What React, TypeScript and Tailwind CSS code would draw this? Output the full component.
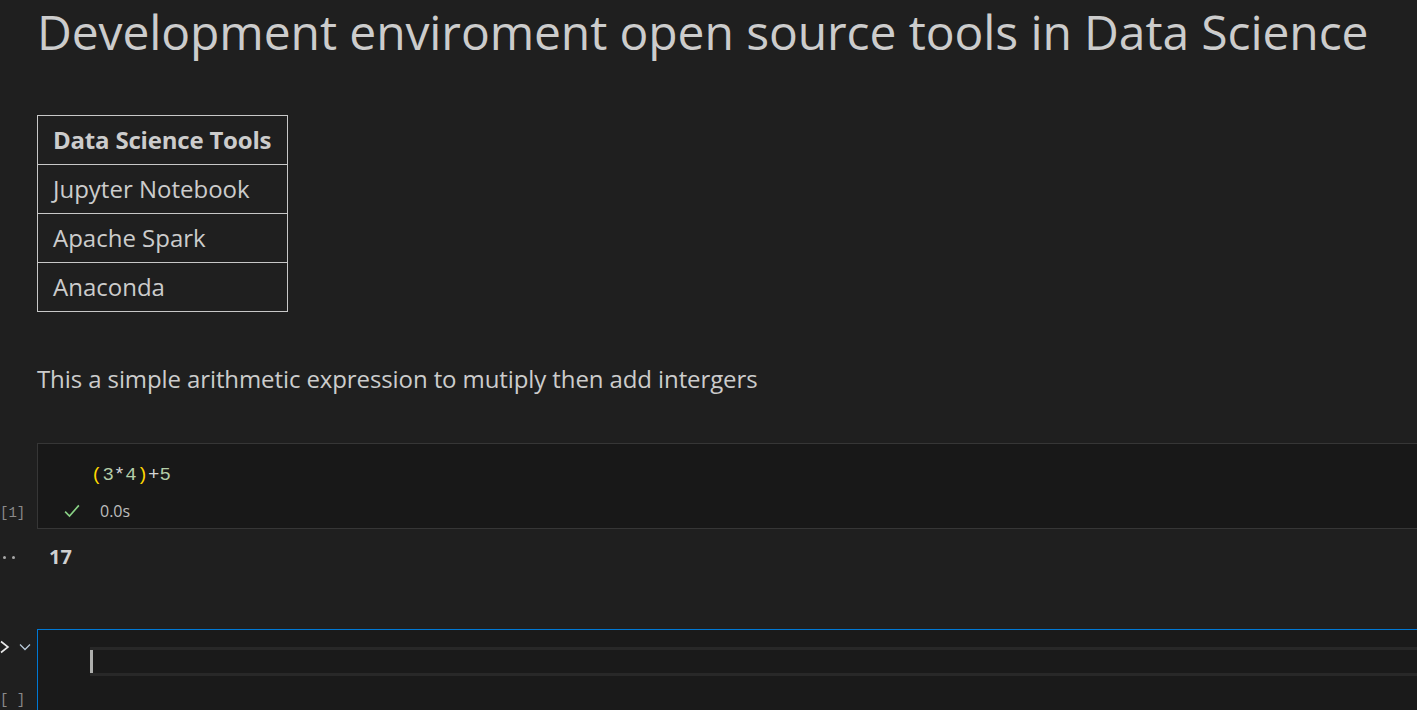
import React from "react"

const sans = { fontFamily: '"Open Sans", "Noto Sans", sans-serif' }
const mono = { fontFamily: '"Liberation Mono", "DejaVu Sans Mono", monospace' }

const tools = ["Jupyter Notebook", "Apache Spark", "Anaconda"]

export default function App() {
  return (
    <div className="h-[710px] w-full overflow-hidden bg-[#1f1f1f] text-[#cccccc]" style={sans}>
      {/* Markdown cell */}
      <div className="pl-[37px]">
        <h1 className="h-[64px] text-[48px] leading-[64px] tracking-[-0.1px] text-[#cccccc]">
          Development enviroment open source tools in Data Science
        </h1>

        <table className="mt-[51px] w-[251px] table-fixed border-collapse whitespace-nowrap text-[24px]">
          <thead>
            <tr>
              <th className="h-[49px] border border-[#c8c8c8] pl-[15px] text-left font-bold tracking-[-0.2px]">
                Data Science Tools
              </th>
            </tr>
          </thead>
          <tbody>
            {tools.map((tool) => (
              <tr key={tool}>
                <td className="h-[49px] border border-[#c8c8c8] pl-[15px]">{tool}</td>
              </tr>
            ))}
          </tbody>
        </table>

        <p className="mt-[49px] h-[36px] text-[24px] leading-[36px] tracking-[-0.1px]">
          This a simple arithmetic expression to mutiply then add intergers
        </p>
      </div>

      {/* Code cell [1] */}
      <div className="mt-[46px] flex">
        <div className="flex w-[37px] shrink-0 flex-col justify-end pb-[7px]">
          <span className="text-[14px] leading-[18px] text-[#8b8b8b]" style={mono}>[1]</span>
        </div>
        <div className="h-[86px] flex-1 border border-r-0 border-[#363636] bg-[#181818]">
          <div className="pl-[53px] pt-[19px] text-[19px] leading-[24px]" style={mono}>
            <span className="text-[#ffd700]">(</span>
            <span className="text-[#b5cea8]">3</span>
            <span className="text-[#d4d4d4]">*</span>
            <span className="text-[#b5cea8]">4</span>
            <span className="text-[#ffd700]">)</span>
            <span className="text-[#d4d4d4]">+</span>
            <span className="text-[#b5cea8]">5</span>
          </div>
          <div className="mt-[12px] flex items-center pl-[24px]">
            <svg width="20" height="20" viewBox="0 0 16 16" fill="none" stroke="#89d185" strokeWidth="1.3">
              <path d="M2.5 8.5l3.5 3.5 7.5-8.5" />
            </svg>
            <span className="ml-[18px] text-[16px] text-[#bdbdbd]">0.0s</span>
          </div>
        </div>
      </div>

      {/* Output */}
      <div className="flex h-[100px] items-start pt-[14px]">
        <div className="flex h-[28px] w-[37px] shrink-0 items-center gap-[6px] pl-[3px]">
          <div className="h-[3px] w-[3px] rounded-full bg-[#a8a8a8]" />
          <div className="h-[3px] w-[3px] rounded-full bg-[#a8a8a8]" />
        </div>
        <span className="pl-[12px] text-[20px] font-bold leading-[28px] text-[#d0d0d0]">17</span>
      </div>

      {/* Empty focused cell */}
      <div className="flex">
        <div className="flex w-[37px] shrink-0 flex-col pt-[11px]">
          <div className="flex h-[14px] items-center">
            <svg width="10" height="14" viewBox="0 0 10 14" fill="none" stroke="#e8e8e8" strokeWidth="1.6">
              <path d="M1 1.5l7 5.5-7 5.5" />
            </svg>
            <svg className="ml-[9px]" width="12" height="8" viewBox="0 0 12 8" fill="none" stroke="#b8c8d8" strokeWidth="1.3">
              <path d="M1 1.5l5 5 5-5" />
            </svg>
          </div>
          <span className="mt-[37px] text-[14px] leading-[18px] text-[#8b8b8b]" style={mono}>[ ]</span>
        </div>
        <div className="h-[90px] flex-1 border-l border-t border-[#0078d4] bg-[#1a1a1a] pt-[17px]">
          <div className="ml-[52px] h-[29px] border-y-[3px] border-[#282828]">
            <div className="h-full w-[3px] bg-[#aeafad]" />
          </div>
        </div>
      </div>
    </div>
  )
}
